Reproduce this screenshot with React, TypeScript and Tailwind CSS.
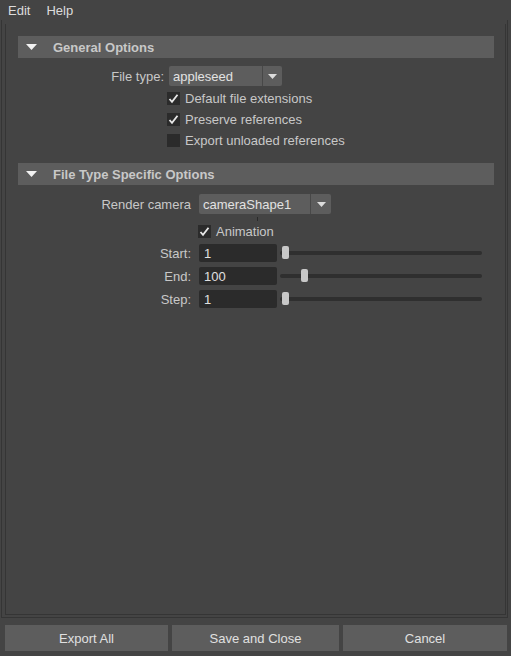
const font = { fontFamily: '"Liberation Sans", Arial, sans-serif' };

function Check({ on }: { on: boolean }) {
  return (
    <div className="w-[13px] h-[13px] bg-[#2b2b2b] flex items-center justify-center shrink-0">
      {on && (
        <svg width="11" height="11" viewBox="0 0 11 11">
          <polyline points="1.5,6 4,8.8 9.5,1.8" fill="none" stroke="#e8e8e8" strokeWidth="1.8" />
        </svg>
      )}
    </div>
  );
}

function Header({ title }: { title: string }) {
  return (
    <div className="ml-[12px] w-[476px] h-[22px] bg-[#5d5d5d] flex items-center">
      <svg width="11" height="6" viewBox="0 0 11 6" className="ml-[8px]">
        <polygon points="0,0 11,0 5.5,6" fill="#f2f2f2" />
      </svg>
      <span className="ml-[16px] pt-[2px] font-bold text-[13px] text-[#c8c8c8]">{title}</span>
    </div>
  );
}

function Dropdown({ value, textW, arrowW }: { value: string; textW: number; arrowW: number }) {
  return (
    <div className="relative flex h-[20px] bg-[#5d5d5d] rounded-[2px]">
      <div style={{ width: textW }} className="flex items-center pl-[4px] pt-[1px] text-[13px] text-[#e2e2e2]">
        {value}
      </div>
      <div className="w-[1px] bg-[#484848]" />
      <div style={{ width: arrowW }} className="flex items-center justify-center">
        <svg width="9" height="5" viewBox="0 0 9 5">
          <polygon points="0,0 9,0 4.5,5" fill="#dcdcdc" />
        </svg>
      </div>
    </div>
  );
}

function CheckRow({ on, label, left }: { on: boolean; label: string; left: string }) {
  return (
    <div className={`flex items-center h-[21px] ${left}`}>
      <Check on={on} />
      <span className="ml-[5px] text-[13px] text-[#c8c8c8]">{label}</span>
    </div>
  );
}

function SliderRow({ label, value, handle }: { label: string; value: string; handle: number }) {
  return (
    <div className="flex items-center h-[18px]">
      <div className="w-[185px] pt-[2px] text-right text-[13px] text-[#c8c8c8]">{label}</div>
      <div className="ml-[8px] w-[78px] h-[18px] bg-[#2b2b2b] rounded-[2px] flex items-center pl-[5px] pt-[2px] text-[13px] text-[#e0e0e0]">
        {value}
      </div>
      <div className="relative ml-[3px] w-[202px] h-[4px] bg-[#2f2f2f] rounded-full">
        <div
          className="absolute top-[-5px] w-[7px] h-[13px] bg-[#c8c8c8] rounded-[2px]"
          style={{ left: handle }}
        />
      </div>
    </div>
  );
}

export default function App() {
  return (
    <div style={font} className="w-[511px] h-[656px] bg-[#444444] flex flex-col overflow-hidden">
      <div className="h-[20px] flex items-center pl-[8px] pt-[2px] gap-[16px] text-[13px] text-[#dcdcdc]">
        <span>Edit</span>
        <span>Help</span>
      </div>

      <div className="flex-1 ml-[1px] mr-[3px] pt-[4px] pl-[3px] pr-[1px] pb-[2px] border-l border-r border-b border-[#353535] flex">
        <div className="flex-1 border-l border-r border-b border-[#353535] flex flex-col">
          <div className="mt-[12px]">
            <Header title="General Options" />
          </div>

          <div className="mt-[8px] flex items-center h-[20px]">
            <div className="w-[158px] pt-[1px] text-right text-[13px] text-[#c8c8c8]">File type:</div>
            <div className="ml-[5px]">
              <Dropdown value="appleseed" textW={93} arrowW={19} />
            </div>
          </div>

          <div className="mt-[2px] flex flex-col">
            <CheckRow on label="Default file extensions" left="ml-[161px]" />
            <CheckRow on label="Preserve references" left="ml-[161px]" />
            <CheckRow on={false} label="Export unloaded references" left="ml-[161px]" />
          </div>

          <div className="mt-[12px]">
            <Header title="File Type Specific Options" />
          </div>

          <div className="mt-[9px] flex items-center h-[20px]">
            <div className="w-[185px] pt-[1px] text-right text-[13px] text-[#c8c8c8]">Render camera</div>
            <div className="relative ml-[8px]">
              <Dropdown value="cameraShape1" textW={111} arrowW={20} />
              <div className="absolute top-[23px] left-[58px] w-[1px] h-[4px] bg-[#2a2a2a]" />
            </div>
          </div>

          <div className="mt-[7px]">
            <CheckRow on label="Animation" left="ml-[192px]" />
          </div>

          <div className="mt-[2px] flex flex-col gap-[5px]">
            <SliderRow label="Start:" value="1" handle={2} />
            <SliderRow label="End:" value="100" handle={21} />
            <SliderRow label="Step:" value="1" handle={2} />
          </div>
        </div>
      </div>

      <div className="h-[38px] flex gap-[4px] pl-[5px] pt-[7px] pb-[5px]">
        {[
          { t: "Export All", w: "w-[163px]" },
          { t: "Save and Close", w: "w-[167px]" },
          { t: "Cancel", w: "w-[164px]" },
        ].map((b) => (
          <div
            key={b.t}
            className={`${b.w} bg-[#5d5d5d] flex items-center justify-center pt-[2px] text-[13px] text-[#e0e0e0]`}
          >
            {b.t}
          </div>
        ))}
      </div>
    </div>
  );
}
